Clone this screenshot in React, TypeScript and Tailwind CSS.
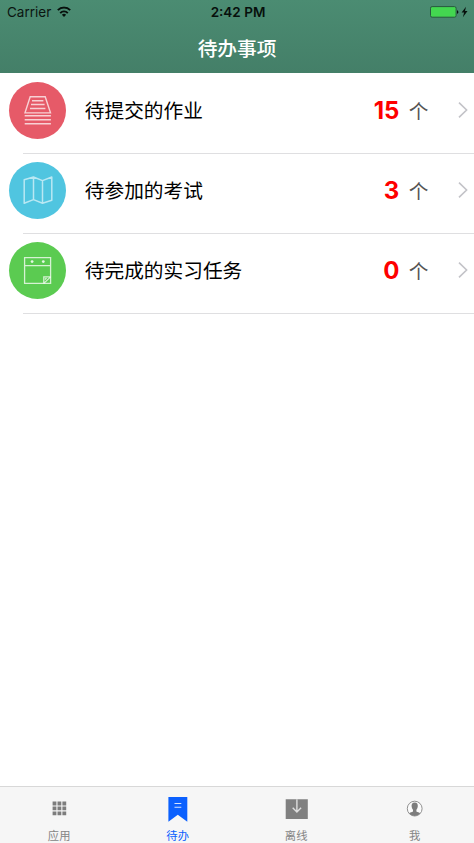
import type { ReactNode } from "react";

const HomeworkIcon = () => (
  <svg viewBox="0 0 57 57" className="h-[57px] w-[57px]" fill="none" stroke="#fff" strokeOpacity="0.72">
    <path d="M21.2 14.7h15l5.3 16.2H16z" strokeWidth="1.4" />
    <path d="M23 18.7h11.4M22 22.5h13.6M21 26.5h15.4" strokeWidth="1.5" />
    <path d="M15.7 33.8h26.2M15.7 37.8h26.2M15.7 41.8h26.2" strokeWidth="1.6" />
  </svg>
);

const ExamIcon = () => (
  <svg viewBox="0 0 57 57" className="h-[57px] w-[57px]" fill="none" stroke="#fff" strokeOpacity="0.6">
    <path
      d="M15.2 17.8L24.5 15l9 3.6 9.3-3.6v23.3l-9.3 2.9-9-3.6-9.3 3.6zM24.5 15v22.6M33.5 18.6v22.6"
      strokeWidth="1.5"
      strokeLinejoin="round"
    />
  </svg>
);

const TaskIcon = () => (
  <svg viewBox="0 0 57 57" className="h-[57px] w-[57px]" fill="none" stroke="#fff" strokeOpacity="0.75">
    <path d="M15.6 15.6h26v25.8h-26zM15.6 23.7h26" strokeWidth="1.3" />
    <path d="M34.8 41.4v-6.5h6.8M34.8 41.4l6.8-6.5M36 37.5l1.5-1.5" strokeWidth="1.3" />
    <circle cx="23.1" cy="19.6" r="1.4" fill="#fff" fillOpacity="0.85" stroke="none" />
    <circle cx="34.3" cy="19.6" r="1.4" fill="#fff" fillOpacity="0.85" stroke="none" />
  </svg>
);

const todos = [
  { id: 1, title: "待提交的作业", count: 15, color: "bg-[#e65a68]", icon: <HomeworkIcon /> },
  { id: 2, title: "待参加的考试", count: 3, color: "bg-[#50c5e0]", icon: <ExamIcon /> },
  { id: 3, title: "待完成的实习任务", count: 0, color: "bg-[#5bcb51]", icon: <TaskIcon /> },
];

const tabs: { label: string; active?: boolean; icon: ReactNode }[] = [
  {
    label: "应用",
    icon: (
      <svg viewBox="0 0 30 30" className="h-[30px] w-[30px]" fill="#7d7d7d">
        <path d="M8.6 9.6h3.8v3.8H8.6zM13.5 9.6h3.8v3.8h-3.8zM18.4 9.6h3.8v3.8h-3.8zM8.6 14.5h3.8v3.8H8.6zM13.5 14.5h3.8v3.8h-3.8zM18.4 14.5h3.8v3.8h-3.8zM8.6 19.4h3.8v3.8H8.6zM13.5 19.4h3.8v3.8h-3.8zM18.4 19.4h3.8v3.8h-3.8z" />
      </svg>
    ),
  },
  {
    label: "待办",
    active: true,
    icon: (
      <svg viewBox="0 0 30 30" className="h-[30px] w-[30px]">
        <path d="M5.4 5h18.9v24.8l-9.5-7-9.4 7z" fill="#0b60fe" />
        <path d="M11.5 11.5h6.8M11.5 15.3h6.8" stroke="#d5e3ff" strokeWidth="1.1" />
      </svg>
    ),
  },
  {
    label: "离线",
    icon: (
      <svg viewBox="0 0 30 30" className="h-[30px] w-[30px]">
        <path d="M4.7 7.3h22.1v19.6h-22.1z" fill="#808080" />
        <path d="M15.9 7.3v12.6M11.7 15.8l4.2 4.2 4.2-4.2" stroke="#dedede" strokeWidth="1.4" fill="none" />
      </svg>
    ),
  },
  {
    label: "我",
    icon: (
      <svg viewBox="0 0 30 30" className="h-[30px] w-[30px]">
        <circle cx="14.7" cy="16.6" r="7.4" fill="#fbfbfb" stroke="#858585" strokeWidth="0.9" />
        <path
          d="M14.7 10.5c-2.2 0-3.3 1.5-3.1 3.6.1 1.6.5 2.7 1.4 3.6v1.8c-1.2.7-2.8.9-3.9 1.8a7.2 7.2 0 0 0 11.2 0c-1.1-.9-2.7-1.1-3.9-1.8v-1.8c.9-.9 1.3-2 1.4-3.6.2-2.1-.9-3.6-3.1-3.6z"
          fill="#7d7d7d"
        />
      </svg>
    ),
  },
];

const StatusBar = () => (
  <div className="grid h-6 grid-cols-3 items-center text-[13.5px] leading-6 text-[#0b1511]">
    <div className="flex items-center pl-[7px]">
      <span>Carrier</span>
      <svg viewBox="0 0 14 11" className="ml-[6px] h-[11px] w-[14px] -translate-y-[0.8px]" fill="none" stroke="#07100c" strokeWidth="2">
        <path d="M.8 3.9a9 9 0 0 1 12.4 0M3.2 6.9a5.5 5.5 0 0 1 7.6 0" />
        <path d="M4.9 8.5a3.2 3.2 0 0 1 4.2 0L7 10.7z" fill="#07100c" stroke="none" />
      </svg>
    </div>
    <div className="pl-[2px] text-center font-semibold text-[#07100c]">2:42 PM</div>
    <div className="flex items-center justify-end pr-[6px]">
      <svg viewBox="0 0 38 12" className="h-3 w-[38px]">
        <rect x=".5" y=".6" width="25.6" height="10.6" rx="1.6" fill="#43d750" stroke="#28583f" />
        <path d="M27 4.2c1.8.3 1.8 3.3 0 3.6z" fill="#07100c" />
        <path d="M36 .8l-4.4 5.6h2.5l-1.2 4.8L37.5 5H35z" fill="#07100c" />
      </svg>
    </div>
  </div>
);

const App = () => {
  return (
    <div className="flex h-[843px] w-[474px] flex-col overflow-hidden bg-white font-['Inter','Noto_Sans_CJK_SC',sans-serif]">
      <header className="h-[73.4px] shrink-0 bg-linear-to-b from-[#4b8c72] to-[#447f68]">
        <StatusBar />
        <h1 className="pt-[10px] text-center text-[19.7px] leading-[30px] font-medium text-white">待办事项</h1>
      </header>

      <ul className="flex-1">
        {todos.map((todo) => (
          <li key={todo.id} className="flex h-[80.2px] flex-col">
            <div className="flex flex-1 items-center pr-[5px] pb-[4.8px] pl-[9.3px]">
              <div className={`h-[57px] w-[57px] rounded-full ${todo.color}`}>{todo.icon}</div>
              <span className="ml-[18.5px] pt-[0.8px] text-[19.7px] leading-[30px] text-black">{todo.title}</span>
              <span className="ml-auto pt-[0.8px] text-[24px] leading-[30px] font-bold text-[#fe0000]">{todo.count}</span>
              <span className="ml-[9.5px] pt-[2.4px] text-[19.7px] leading-[30px] text-[#555]">个</span>
              <svg viewBox="0 0 12 18" className="ml-[28.5px] h-[18px] w-[12px]" fill="none" stroke="#c3c3c8" strokeWidth="1.6">
                <path d="M2 .6l7.6 7.4L2 15.4" />
              </svg>
            </div>
            <div className="ml-[23px] h-px bg-[#dfdfe1]" />
          </li>
        ))}
      </ul>

      <nav className="grid h-[57px] shrink-0 grid-cols-4 border-t border-[#d8d8d8] bg-[#f6f6f6]">
        {tabs.map((tab) => (
          <div key={tab.label} className="flex flex-col items-center pt-[5px]">
            {tab.icon}
            <span className={`pt-[5px] text-[11.3px] leading-[18px] tracking-[0.2px] ${tab.active ? "text-[#0b60fe]" : "text-[#858585]"}`}>
              {tab.label}
            </span>
          </div>
        ))}
      </nav>
    </div>
  );
};

export default App;
